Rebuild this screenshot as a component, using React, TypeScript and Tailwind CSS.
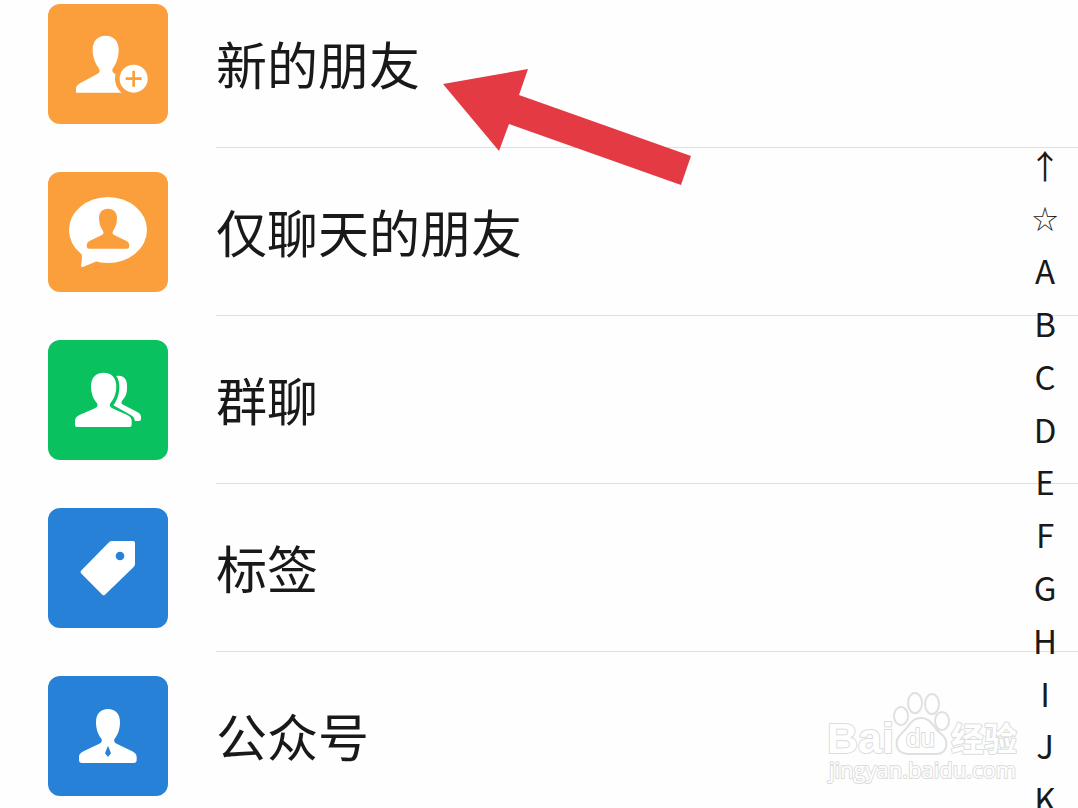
import React from 'react';

type Entry = {
  label: string;
  tile: string;
  icon: React.ReactNode;
};

const NewFriendIcon = () => (
  <svg viewBox="0 0 360 360" className="size-full" aria-hidden="true">
    <path
      fill="#fff"
      d="M173 95C197 95 212 112 212 136C212 162 205 178 195 192C191 199 192 204 200 209L262 240V266H84V255C84 248 88 243 96 238L149 209C156 205 157 199 152 192C142 178 134 162 134 136C134 112 149 95 173 95Z"
    />
    <circle cx="257" cy="224" r="56" fill="#fa9f3c" />
    <circle cx="257" cy="224" r="42" fill="#fff" />
    <path d="M257 200V248M233 224H281" stroke="#fa9f3c" strokeWidth="8" />
  </svg>
);

const ChatOnlyIcon = () => (
  <svg viewBox="0 0 360 360" className="size-full" aria-hidden="true">
    <ellipse cx="180" cy="174" rx="117" ry="99" fill="#fff" />
    <path fill="#fff" d="M100 238Q104 262 99 280Q99 287 106 284L143 269L150 240Z" />
    <path
      fill="#fa9f3c"
      d="M180 110C197 110 207 121 207 138C207 156 201 168 195 177C192 184 194 187 200 190L234 206C242 210 244 215 244 222C244 227 241 230 236 230H124C119 230 116 227 116 222C116 215 118 210 126 206L160 190C166 187 168 184 165 177C159 168 153 156 153 138C153 121 163 110 180 110Z"
    />
  </svg>
);

const GroupIcon = () => (
  <svg viewBox="0 0 360 360" className="size-full" aria-hidden="true">
    <path
      fill="#fff"
      d="M167 98C191 98 205 114 205 138C205 162 197 178 187 190C183 197 186 202 193 205L236 224C247 229 251 234 251 242V255Q251 261 245 261H87Q81 261 81 255V242C81 234 85 229 96 224L141 205C148 202 151 197 147 190C137 178 129 162 129 138C129 114 143 98 167 98Z"
    />
    <path
      fill="#fff"
      d="M205 108C227 104 237 118 237 136V145C237 163 231 172 222 183C218 189 221 192 227 195L268 216C277 221 279 225 279 232V237Q279 243 273 243H261C259 233 256 229 247 224L196 196C203 188 214 167 214 142C214 127 211 117 205 108Z"
    />
  </svg>
);

const TagIcon = () => (
  <svg viewBox="0 0 360 360" className="size-full" aria-hidden="true">
    <path
      fill="#fff"
      d="M193 99H256Q261 99 261 104V168Q261 173 257 177L171 260Q167 264 163 260L99 196Q96 192 99 188L183 103Q187 99 193 99Z"
    />
    <circle cx="216" cy="144" r="13" fill="#2782d7" />
  </svg>
);

const OfficialIcon = () => (
  <svg viewBox="0 0 360 360" className="size-full" aria-hidden="true">
    <path
      fill="#fff"
      d="M180 99C202 99 216 114 216 138C216 161 209 176 201 187C196 194 199 200 206 203L251 225C263 231 266 236 266 244V252Q266 261 257 261H102Q93 261 93 252V244C93 236 96 231 108 225L154 203C161 200 164 194 159 187C151 176 144 161 144 138C144 114 158 99 180 99Z"
    />
    <path fill="#2782d7" d="M180 209L189 232L180 243L171 232Z" />
  </svg>
);

const entries: Entry[] = [
  { label: '新的朋友', tile: 'bg-[#fa9f3c]', icon: <NewFriendIcon /> },
  { label: '仅聊天的朋友', tile: 'bg-[#fa9f3c]', icon: <ChatOnlyIcon /> },
  { label: '群聊', tile: 'bg-[#0ac160]', icon: <GroupIcon /> },
  { label: '标签', tile: 'bg-[#2782d7]', icon: <TagIcon /> },
  { label: '公众号', tile: 'bg-[#2782d7]', icon: <OfficialIcon /> },
];

const indexKeys = ['↑', '☆', 'A', 'B', 'C', 'D', 'E', 'F', 'G', 'H', 'I', 'J', 'K'];

const ContactRow: React.FC<{ entry: Entry }> = ({ entry }) => (
  <li>
    <button type="button" className="flex h-[168px] w-full items-stretch pl-12 text-left">
      <span className={`my-6 size-[120px] shrink-0 overflow-hidden rounded-xl ${entry.tile}`}>
        {entry.icon}
      </span>
      <span className="ml-12 flex flex-1 items-center border-b border-[#e0e0e0] text-[51px] leading-none">
        {entry.label}
      </span>
    </button>
  </li>
);

const LetterIndex = () => (
  <nav aria-label="索引" className="absolute top-[139px] right-2 flex h-[686px] w-[50px] flex-col">
    {indexKeys.map(key => (
      <button
        key={key}
        type="button"
        className={`flex flex-1 items-center justify-center leading-none ${key === '☆' ? 'text-[26px] font-light' : 'text-[33px]'}`}
      >
        {key}
      </button>
    ))}
  </nav>
);

const PointerArrow = () => (
  <svg viewBox="0 0 248 116" className="absolute top-[69px] left-[443px] w-[248px]" aria-hidden="true">
    <path fill="#e43a44" d="M0 15L85 0L76 26L248 87L238 116L66 55L56 82Z" />
  </svg>
);

const Watermark = () => (
  <svg
    viewBox="0 0 200 100"
    className="absolute right-[54px] bottom-[18px] w-[200px]"
    fill="#fff"
    stroke="#dcdcdc"
    strokeWidth="2"
    strokeLinejoin="round"
  >
    <text x="3" y="63" fontSize="43" fontWeight="700" fontFamily="Liberation Sans, sans-serif" paintOrder="stroke">Bai</text>
    <g stroke="#e0e0e0">
      <ellipse cx="77" cy="26" rx="7" ry="9" />
      <ellipse cx="91" cy="13" rx="7" ry="10" />
      <ellipse cx="108" cy="14" rx="7" ry="10" />
      <ellipse cx="118" cy="31" rx="7" ry="9" />
      <path d="M97 28C107 28 109 37 116 43C126 50 124 64 112 64H84C70 63 70 50 78 43C86 36 87 28 97 28Z" />
    </g>
    <text x="82" y="57" fontSize="26" fontFamily="Liberation Sans, sans-serif" paintOrder="stroke">du</text>
    <text x="127" y="61" fontSize="33" fontWeight="700" fontFamily="Noto Sans CJK SC, sans-serif" paintOrder="stroke">经验</text>
    <text x="5" y="88" fontSize="22" fontWeight="500" fontFamily="Open Sans, sans-serif" paintOrder="stroke">jingyan.baidu.com</text>
  </svg>
);

export default function App() {
  return (
    <main className="relative h-screen overflow-hidden bg-[#fefefe] font-['Noto_Sans_CJK_SC',sans-serif] text-[#191919]">
      <ul className="-mt-5">
        {entries.map(entry => (
          <ContactRow key={entry.label} entry={entry} />
        ))}
      </ul>
      <Watermark />
      <LetterIndex />
      <PointerArrow />
    </main>
  );
}
